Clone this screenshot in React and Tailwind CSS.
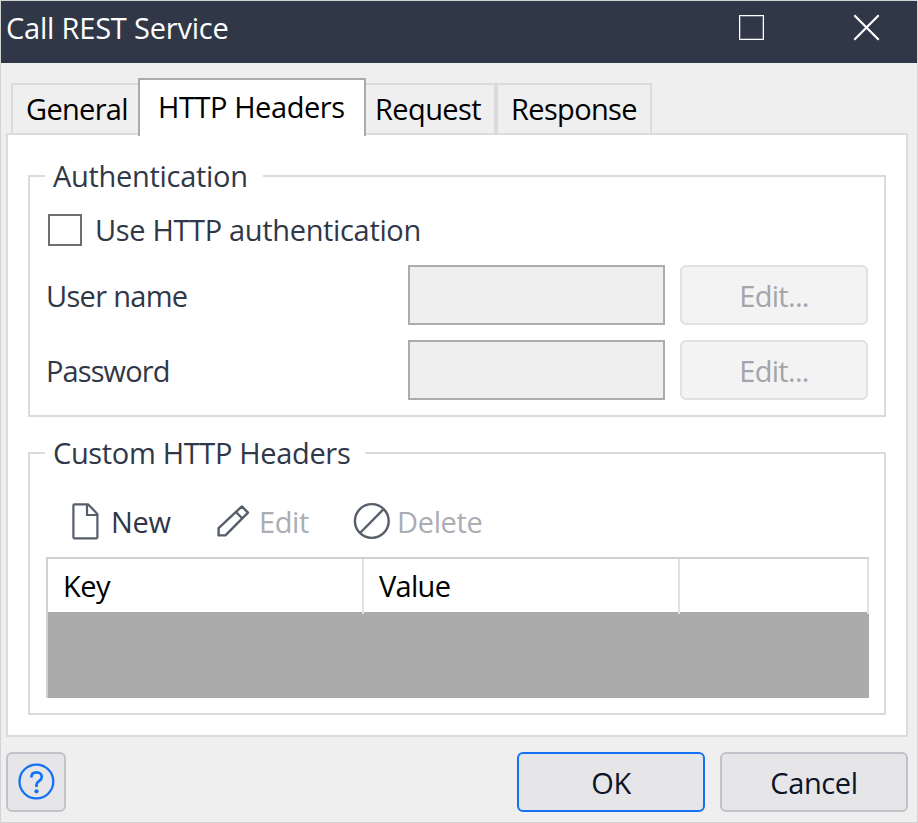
import React from "react";

function NewIcon() {
  return (
    <svg width="28" height="38" viewBox="0 0 28 38" fill="none" stroke="#565e6b" strokeWidth="2.2" strokeLinejoin="round">
      <path d="M3.4 2.3H17L26.4 11.9V35.3Q26.4 36.3 25.4 36.3H3.4Q2.4 36.3 2.4 35.3V3.3Q2.4 2.3 3.4 2.3Z" />
      <path d="M16 2.3V13H26.4" strokeLinejoin="miter" />
    </svg>
  );
}

function PencilIcon() {
  return (
    <svg width="34" height="34" viewBox="0 0 34 34" fill="none" stroke="#565e6b" strokeWidth="2.4">
      <path d="M2.6 31.4V24.2L25.9 2.4L32 8.7L9.4 31.4Z" strokeLinejoin="round" />
      <path d="M20 8L26.3 14.5" />
    </svg>
  );
}

function DeleteIcon() {
  return (
    <svg width="38" height="38" viewBox="0 0 38 38" fill="none" stroke="#565e6b" strokeWidth="2.4">
      <circle cx="18.8" cy="19" r="16.9" />
      <path d="M7 31L30.6 7.2" />
    </svg>
  );
}

function HelpIcon() {
  return (
    <svg width="38" height="38" viewBox="0 0 38 38" fill="none" stroke="#1271f5" strokeWidth="2.3">
      <circle cx="19.4" cy="18.5" r="16.9" />
      <path d="M14.4 14.6V14C14.4 10.9 16.5 9.3 19.5 9.3C22.6 9.3 24.8 11.2 24.8 13.9C24.8 18.2 19.5 18 19.5 21.6V24" strokeWidth="2.7" />
      <circle cx="19.5" cy="28.3" r="2.1" fill="#1271f5" stroke="none" />
    </svg>
  );
}

function Credential({ label, className }) {
  return (
    <div className="flex h-[60px]">
      <label className="w-[362px] pt-[11px]"><span className={className}>{label}</span></label>
      <input disabled className="h-[60px] w-[257px] border-2 border-[#ababb0] bg-[#efefef]" />
      <button className="ml-[15px] h-[60px] w-[188px] rounded-[6px] border-2 border-[#dfdfe4] bg-[#f3f3f3] pt-[1px] text-[#a3a5ad]">
        <span className="tracking-[-0.7px]">Edit...</span>
      </button>
    </div>
  );
}

export default function App() {
  return (
    <div className="flex h-[823px] w-[918px] flex-col overflow-hidden border border-[#d3d3d3] bg-[#efefef] font-['Open_Sans','Noto_Sans',sans-serif] text-[29px] leading-[40px] whitespace-nowrap text-[#303747]">
      <header className="flex h-[62px] shrink-0 bg-[#303747] text-white">
        <h1 className="w-[737px] pt-[7px] pl-[5px]"><span className="tracking-[-0.2px]">Call REST Service</span></h1>
        <svg className="mt-[13px]" width="27" height="27" viewBox="0 0 27 27" fill="none">
          <rect x="1.5" y="1.5" width="24" height="24" stroke="#fff" />
          <rect x="2.5" y="2.5" width="22" height="22" stroke="#6b6c80" />
        </svg>
        <svg className="mt-[13px] ml-[88px]" width="27" height="27" viewBox="0 0 27 27" stroke="#fff" strokeWidth="2.2">
          <path d="M1.3 1.3L25.7 25.7M25.7 1.3L1.3 25.7" />
        </svg>
      </header>

      <nav className="relative z-10 mt-[15px] flex h-[58px] shrink-0 items-start pl-[10px] text-black">
        <div className="mt-[5px] h-[50px] w-[127px] border-t-2 border-l-2 border-[#dbdbdb] pt-[4px] pl-[13px]"><span className="tracking-[-0.7px]">General</span></div>
        <div className="h-[58px] w-[228px] border-2 border-b-0 border-[#ababab] bg-white pt-[7px] pl-[18px]"><span className="tracking-[-0.43px]">HTTP Headers</span></div>
        <div className="mt-[5px] h-[50px] w-[130px] border-t-2 border-r-2 border-[#dbdbdb] pt-[4px] pl-[9px]"><span className="tracking-[-0.6px]">Request</span></div>
        <div className="mt-[5px] h-[50px] w-[156px] border-2 border-b-0 border-[#dbdbdb] pt-[4px] pl-[13px]"><span className="tracking-[-0.65px]">Response</span></div>
      </nav>

      <main className="mt-[-3px] ml-[5px] h-[604px] w-[902px] shrink-0 border-2 border-[#dbdbdb] bg-white pt-[21px] pl-[20px]">
        <fieldset className="h-[261px] w-[858px] min-w-0 border-2 border-[#dbdbdb]">
          <legend className="ml-[15px] h-[40px] w-[218px] pl-[8px]"><span className="tracking-[-0.3px]">Authentication</span></legend>
          <div className="flex h-[69px] pt-[14px] pl-[18px]">
            <div className="mt-[4px] h-[32px] w-[34px] border-2 border-[#6e6e6e] bg-white" />
            <span className="ml-[13px] tracking-[-0.34px]">Use HTTP authentication</span>
          </div>
          <div className="flex flex-col gap-[15px] pl-[16px]">
            <Credential label="User name" className="tracking-[-0.7px]" />
            <Credential label="Password" className="tracking-[-0.9px]" />
          </div>
        </fieldset>

        <fieldset className="mt-[16px] h-[282px] w-[858px] min-w-0 border-2 border-[#dbdbdb] pl-[16px]">
          <legend className="ml-[-1px] h-[40px] w-[320px] pl-[8px]"><span className="tracking-[-0.34px]">Custom HTTP Headers</span></legend>
          <div className="flex h-[84px] pt-[29px] pl-[25px]">
            <div className="flex w-[145px]"><NewIcon /><span className="ml-[12px] tracking-[-0.3px]">New</span></div>
            <div className="flex w-[137px] text-[#abadb4]"><span className="mt-[2px]"><PencilIcon /></span><span className="ml-[9px] tracking-[-0.4px]">Edit</span></div>
            <div className="flex text-[#abadb4]"><DeleteIcon /><span className="ml-[6px] tracking-[-0.35px]">Delete</span></div>
          </div>
          <div className="h-[141px] w-[823px] border-t-2 border-l-2 border-[#d0d0d0] bg-[#ababab] text-black">
            <div className="flex h-[53px]">
              <div className="w-[314px] bg-white pt-[7px] pl-[15px]"><span className="tracking-[-0.5px]">Key</span></div>
              <div className="h-[55px] w-[316px] border-l-2 border-[#e1e1e1]"><div className="h-[53px] bg-white pt-[7px] pl-[15px]"><span className="tracking-[-0.7px]">Value</span></div></div>
              <div className="h-[55px] w-[191px] border-x-2 border-[#e1e1e1]"><div className="h-[53px] bg-white" /></div>
            </div>
          </div>
        </fieldset>
      </main>

      <footer className="mt-[15px] flex h-[60px] shrink-0 pl-[5px] text-[#0b1526]">
        <button className="flex h-[60px] w-[60px] items-center justify-center rounded-[6px] border-2 border-[#c2c2ca] bg-[#e6e6e9]"><HelpIcon /></button>
        <button className="ml-[451px] h-[60px] w-[188px] rounded-[6px] border-2 border-[#1271f5] bg-[#e6e6e9] pt-[1px]"><span className="tracking-[-0.3px]">OK</span></button>
        <button className="ml-[15px] h-[60px] w-[188px] rounded-[6px] border-2 border-[#c2c2ca] bg-[#e6e6e9] pt-[1px]"><span className="tracking-[-0.4px]">Cancel</span></button>
      </footer>
    </div>
  );
}
